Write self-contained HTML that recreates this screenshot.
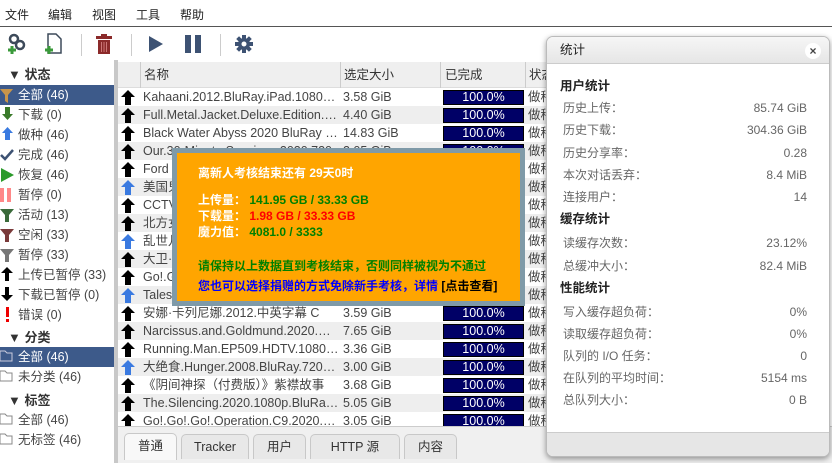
<!DOCTYPE html><html><head><meta charset="utf-8"><style>
*{margin:0;padding:0;box-sizing:border-box}
body{width:832px;height:463px;overflow:hidden;background:#fff;font-family:"Liberation Sans","Noto Sans CJK SC",sans-serif;font-size:12px;color:#333;position:relative}
.abs{position:absolute}
#menu{left:0;top:0;width:832px;height:27px;border-bottom:1px solid #555;background:#fff}
#menu span{position:absolute;top:8px;font-size:12px;color:#222;line-height:14px}
#tb{left:0;top:28px;width:832px;height:32px;background:#fff}
.sep{position:absolute;top:6px;width:1px;height:22px;background:#ccc}
#side{left:0;top:60px;width:114px;height:403px;background:#fff}
#side .it{position:absolute;left:0;width:114px;height:20px;line-height:20px;font-size:12.5px;color:#444;padding-left:18px}
#side .hd{position:absolute;left:8px;font-weight:bold;font-size:13px;color:#333;line-height:16px}
#side .sel{background:#3d5a8a;color:#fff}
#vs{left:114px;top:60px;width:4px;height:403px;background:#c8c8c8}
#hdr{left:118px;top:62px;width:714px;height:26px;background:#efefef;border-bottom:1px solid #ddd}
#hdr span{position:absolute;top:6px;font-size:12.5px;color:#333;line-height:15px}
.row{position:absolute;left:118px;width:714px;height:18px;overflow:hidden}
.row .ar{position:absolute;left:3px;top:2px}
.row .nm{position:absolute;left:25px;top:2px;font-size:12.5px;line-height:15px;height:15px;color:#444;white-space:nowrap;width:196px;overflow:hidden;text-overflow:ellipsis}
.row .sz{position:absolute;left:225px;top:2px;font-size:12.5px;line-height:15px;color:#444}
.row .pb{position:absolute;left:325px;top:2px;width:81px;height:15px;background:#000066;border:1px solid #000;color:#fff;text-align:center;font-size:12.5px;line-height:13px}
.row .st{position:absolute;left:410px;top:2px;font-size:12.5px;line-height:15px;color:#444}
#pop{left:172px;top:148px;width:353px;height:158px;background:#7f9aa8;padding:5px}
#pop .in{width:100%;height:100%;background:#ffa500;position:relative;font-weight:bold;font-size:12px}
#pop .in div{position:absolute;left:21px;white-space:nowrap;line-height:15px}
#stats{left:546px;top:36px;width:284px;height:421px;background:#fff;border:1px solid #bbb;border-radius:7px;box-shadow:0 2px 6px rgba(0,0,0,.4);overflow:hidden}
#stats .tt{height:27px;background:linear-gradient(#f6f6f6,#e6e6e6);border-bottom:1px solid #ccc;font-size:12.5px;padding:6px 0 0 13px;color:#222;line-height:15px}
#stats .h{position:absolute;left:13px;font-size:12.5px;color:#222;font-weight:bold;line-height:15px}
#stats .l{position:absolute;left:16px;font-size:12px;color:#666;line-height:15px}
#stats .v{position:absolute;right:22px;font-size:12px;color:#666;line-height:15px}
#tabs{left:118px;top:426px;width:714px;height:37px;background:#f0f0f0;border-top:1px solid #ccc}
.tab{position:absolute;top:7px;height:25px;background:#e8e8e8;border:1px solid #c8c8c8;border-bottom:none;border-radius:5px 5px 0 0;text-align:center;line-height:24px;font-size:12.5px;color:#333}
</style></head><body>
<div id="menu" class="abs"><span style="left:5px">文件</span><span style="left:48px">编辑</span><span style="left:92px">视图</span><span style="left:136px">工具</span><span style="left:180px">帮助</span></div>
<div id="tb" class="abs">
<svg class="abs" style="left:6px;top:5px" width="22" height="22" viewBox="0 0 22 22"><circle cx="8" cy="6" r="4" fill="none" stroke="#3d4a5a" stroke-width="2.5"/><circle cx="14" cy="12" r="4" fill="none" stroke="#3d4a5a" stroke-width="2.5"/><path d="M2 17h8M6 13v8" stroke="#3a9a3a" stroke-width="3"/></svg>
<svg class="abs" style="left:44px;top:5px" width="20" height="22" viewBox="0 0 20 22"><path d="M4 1h8l5 5v14H4z" fill="#fff" stroke="#3d4a5a" stroke-width="1.5"/><path d="M1 17h8M5 13v8" stroke="#3a9a3a" stroke-width="3"/></svg>
<div class="sep" style="left:81px"></div>
<svg class="abs" style="left:96px;top:6px" width="16" height="20" viewBox="0 0 16 20"><rect x="0" y="2" width="16" height="3" fill="#8b2a2a"/><rect x="5" y="0" width="6" height="3" fill="#8b2a2a"/><path d="M2 6h12v14H2z" fill="#8b2a2a"/><path d="M5.5 8v10M8 8v10M10.5 8v10" stroke="#c77" stroke-width="1"/></svg>
<div class="sep" style="left:131px"></div>
<svg class="abs" style="left:148px;top:7px" width="16" height="18"><path d="M1 1l14 8L1 17z" fill="#3d5273"/></svg>
<svg class="abs" style="left:184px;top:7px" width="18" height="18"><rect x="1" y="0" width="6" height="18" fill="#3d5273"/><rect x="11" y="0" width="6" height="18" fill="#3d5273"/></svg>
<div class="sep" style="left:220px"></div>
<svg class="abs" style="left:235px;top:7px" width="18" height="18" viewBox="0 0 18 18"><g fill="#3d5273"><circle cx="9" cy="9" r="6"/><rect x="7" y="0" width="4" height="18"/><rect x="0" y="7" width="18" height="4"/><rect x="7" y="0" width="4" height="18" transform="rotate(45 9 9)"/><rect x="7" y="0" width="4" height="18" transform="rotate(-45 9 9)"/></g><circle cx="9" cy="9" r="2.5" fill="#fff"/></svg>
</div>
<div id="side" class="abs">
<div class="hd" style="top:7px">▼ 状态</div>
<div class="it sel" style="top:25px">全部 (46)</div>
<div class="it" style="top:45px">下载 (0)</div>
<div class="it" style="top:65px">做种 (46)</div>
<div class="it" style="top:85px">完成 (46)</div>
<div class="it" style="top:105px">恢复 (46)</div>
<div class="it" style="top:125px">暂停 (0)</div>
<div class="it" style="top:145px">活动 (13)</div>
<div class="it" style="top:165px">空闲 (33)</div>
<div class="it" style="top:185px">暂停 (33)</div>
<div class="it" style="top:205px">上传已暂停 (33)</div>
<div class="it" style="top:225px">下载已暂停 (0)</div>
<div class="it" style="top:245px">错误 (0)</div>
<div class="hd" style="top:270px">▼ 分类</div>
<div class="it sel" style="top:287px">全部 (46)</div>
<div class="it" style="top:307px">未分类 (46)</div>
<div class="hd" style="top:333px">▼ 标签</div>
<div class="it" style="top:350px">全部 (46)</div>
<div class="it" style="top:370px">无标签 (46)</div>
<svg class="abs" style="left:0;top:25px" width="16" height="370">
<path d="M0 4h13l-5 6v8l-3-2v-6z" fill="#c8954a"/>
<path d="M5 22h5v7h3l-5.5 6-5.5-6h3z" fill="#3a7a2a"/>
<path d="M7.5 42l5.5 6h-3v7h-5v-7h-3z" fill="#3a7ae0"/>
<path d="M1 70l4 4 8-9" stroke="#3d5273" stroke-width="2.5" fill="none"/>
<path d="M1 83l13 7-13 7z" fill="#2a9a2a"/>
<rect x="0" y="103" width="4" height="14" fill="#f88"/><rect x="7" y="103" width="4" height="14" fill="#f88"/>
<path d="M0 124h14l-5 6v7h-4v-7z" fill="#3a6a3a"/>
<path d="M0 144h14l-5 6v7h-4v-7z" fill="#7a3a3a"/>
<path d="M0 164h14l-5 6v7h-4v-7z" fill="#777"/>
<path d="M7 182l6 6h-4v8h-4v-8h-4z" fill="#000"/>
<path d="M5 202h4v8h4l-6 6-6-6h4z" fill="#000"/>
<rect x="6" y="222" width="3" height="10" fill="#e00"/><rect x="6" y="234" width="3" height="3" fill="#e00"/>
<path d="M0 266h5l2 2h5v8H0z" fill="none" stroke="#ccd" stroke-width="1"/>
<path d="M0 286h5l2 2h5v8H0z" fill="none" stroke="#888" stroke-width="1"/>
<path d="M0 329h5l2 2h5v8H0z" fill="none" stroke="#888" stroke-width="1"/>
<path d="M0 349h5l2 2h5v8H0z" fill="none" stroke="#888" stroke-width="1"/>
</svg>
</div>
<div id="vs" class="abs"></div>
<div id="hdr" class="abs"><span style="left:26px">名称</span><span style="left:226px">选定大小</span><span style="left:327px">已完成</span><span style="left:411px">状态</span>
<div class="abs" style="left:22px;top:0;width:1px;height:26px;background:#ccc"></div><div class="abs" style="left:222px;top:0;width:1px;height:26px;background:#ccc"></div><div class="abs" style="left:322px;top:0;width:1px;height:26px;background:#ccc"></div><div class="abs" style="left:407px;top:0;width:1px;height:26px;background:#ccc"></div></div>
<div id="rows"></div>
<script>
var n=["Kahaani.2012.BluRay.iPad.1080p.AAC","Full.Metal.Jacket.Deluxe.Edition.1987","Black Water Abyss 2020 BluRay Remux","Our.30-Minute.Sessions.2020.720p","Ford v Ferrari 2019","美国鬼子","CCTV纪录片","北方女王","乱世儿女","大卫·科波菲尔","Go!.Go!.Go!","Tales from the Loop","安娜·卡列尼娜.2012.中英字幕 C","Narcissus.and.Goldmund.2020.GER","Running.Man.EP509.HDTV.1080i.H264","大绝食.Hunger.2008.BluRay.720p.x264","《阴间神探（付费版）》紫襟故事","The.Silencing.2020.1080p.BluRay.x264","Go!.Go!.Go!.Operation.C9.2020.1080p"];
var s=["3.58 GiB","4.40 GiB","14.83 GiB","2.05 GiB","","","","","","","","","3.59 GiB","7.65 GiB","3.36 GiB","3.00 GiB","3.68 GiB","5.05 GiB","3.05 GiB"];
var b=[5,8,11,15],h="";
for(var i=0;i<19;i++){var c=b.indexOf(i)>=0?"#3a7ae0":"#000";var nm=n[i];
h+='<div class="row" style="top:'+(88+i*18)+'px;background:'+(i%2?'#eee':'#fff')+'"><svg class="ar" width="14" height="15"><path d="M7 0l7 7h-4v8H4V7H0z" fill="'+c+'"/></svg><div class="nm">'+nm+'</div><div class="sz">'+s[i]+'</div><div class="pb">100.0%</div><div class="st">做种</div></div>';}
document.getElementById('rows').innerHTML=h;
</script>
<div id="tabs" class="abs">
<div class="tab" style="left:6px;width:53px;background:#f8f8f8;height:27px;top:6px">普通</div>
<div class="tab" style="left:63px;width:68px">Tracker</div>
<div class="tab" style="left:135px;width:53px">用户</div>
<div class="tab" style="left:192px;width:90px">HTTP 源</div>
<div class="tab" style="left:286px;width:53px">内容</div>
</div>
<div id="pop" class="abs"><div class="in">
<div style="top:13px;color:#fff">离新人考核结束还有 29天0时</div>
<div style="top:40px;color:#fff">上传量： <span style="color:#008000">141.95 GB / 33.33 GB</span></div>
<div style="top:56px;color:#fff">下载量： <span style="color:#f00">1.98 GB / 33.33 GB</span></div>
<div style="top:72px;color:#fff">魔力值： <span style="color:#008000">4081.0 / 3333</span></div>
<div style="top:106px;color:#008000">请保持以上数据直到考核结束，否则同样被视为不通过</div>
<div style="top:126px;color:#00f">您也可以选择捐赠的方式免除新手考核，详情 <span style="color:#000">[点击查看]</span></div>
</div></div>
<div class="abs" style="left:828px;top:62px;width:4px;height:364px;background:#fff"></div>
<div id="stats" class="abs"><div class="tt">统计</div>
<div class="abs" style="right:8px;top:6px;width:16px;height:16px;border-radius:8px;background:#fff;text-align:center;font-size:12px;font-weight:bold;color:#444;line-height:16px">×</div>
<div class="h" style="top:42px">用户统计</div>
<div class="l" style="top:64px">历史上传：</div><div class="v" style="top:64px">85.74 GiB</div>
<div class="l" style="top:86px">历史下载：</div><div class="v" style="top:86px">304.36 GiB</div>
<div class="l" style="top:109px">历史分享率：</div><div class="v" style="top:109px">0.28</div>
<div class="l" style="top:131px">本次对话丢弃：</div><div class="v" style="top:131px">8.4 MiB</div>
<div class="l" style="top:153px">连接用户：</div><div class="v" style="top:153px">14</div>
<div class="h" style="top:175px">缓存统计</div>
<div class="l" style="top:199px">读缓存次数：</div><div class="v" style="top:199px">23.12%</div>
<div class="l" style="top:222px">总缓冲大小：</div><div class="v" style="top:222px">82.4 MiB</div>
<div class="h" style="top:244px">性能统计</div>
<div class="l" style="top:268px">写入缓存超负荷：</div><div class="v" style="top:268px">0%</div>
<div class="l" style="top:290px">读取缓存超负荷：</div><div class="v" style="top:290px">0%</div>
<div class="l" style="top:312px">队列的 I/O 任务：</div><div class="v" style="top:312px">0</div>
<div class="l" style="top:334px">在队列的平均时间：</div><div class="v" style="top:334px">5154 ms</div>
<div class="l" style="top:356px">总队列大小：</div><div class="v" style="top:356px">0 B</div>
<div class="abs" style="left:0;bottom:0;width:284px;height:24px;background:#e6e6e6;border-top:1px solid #ccc"></div>
</div>
</body></html>
